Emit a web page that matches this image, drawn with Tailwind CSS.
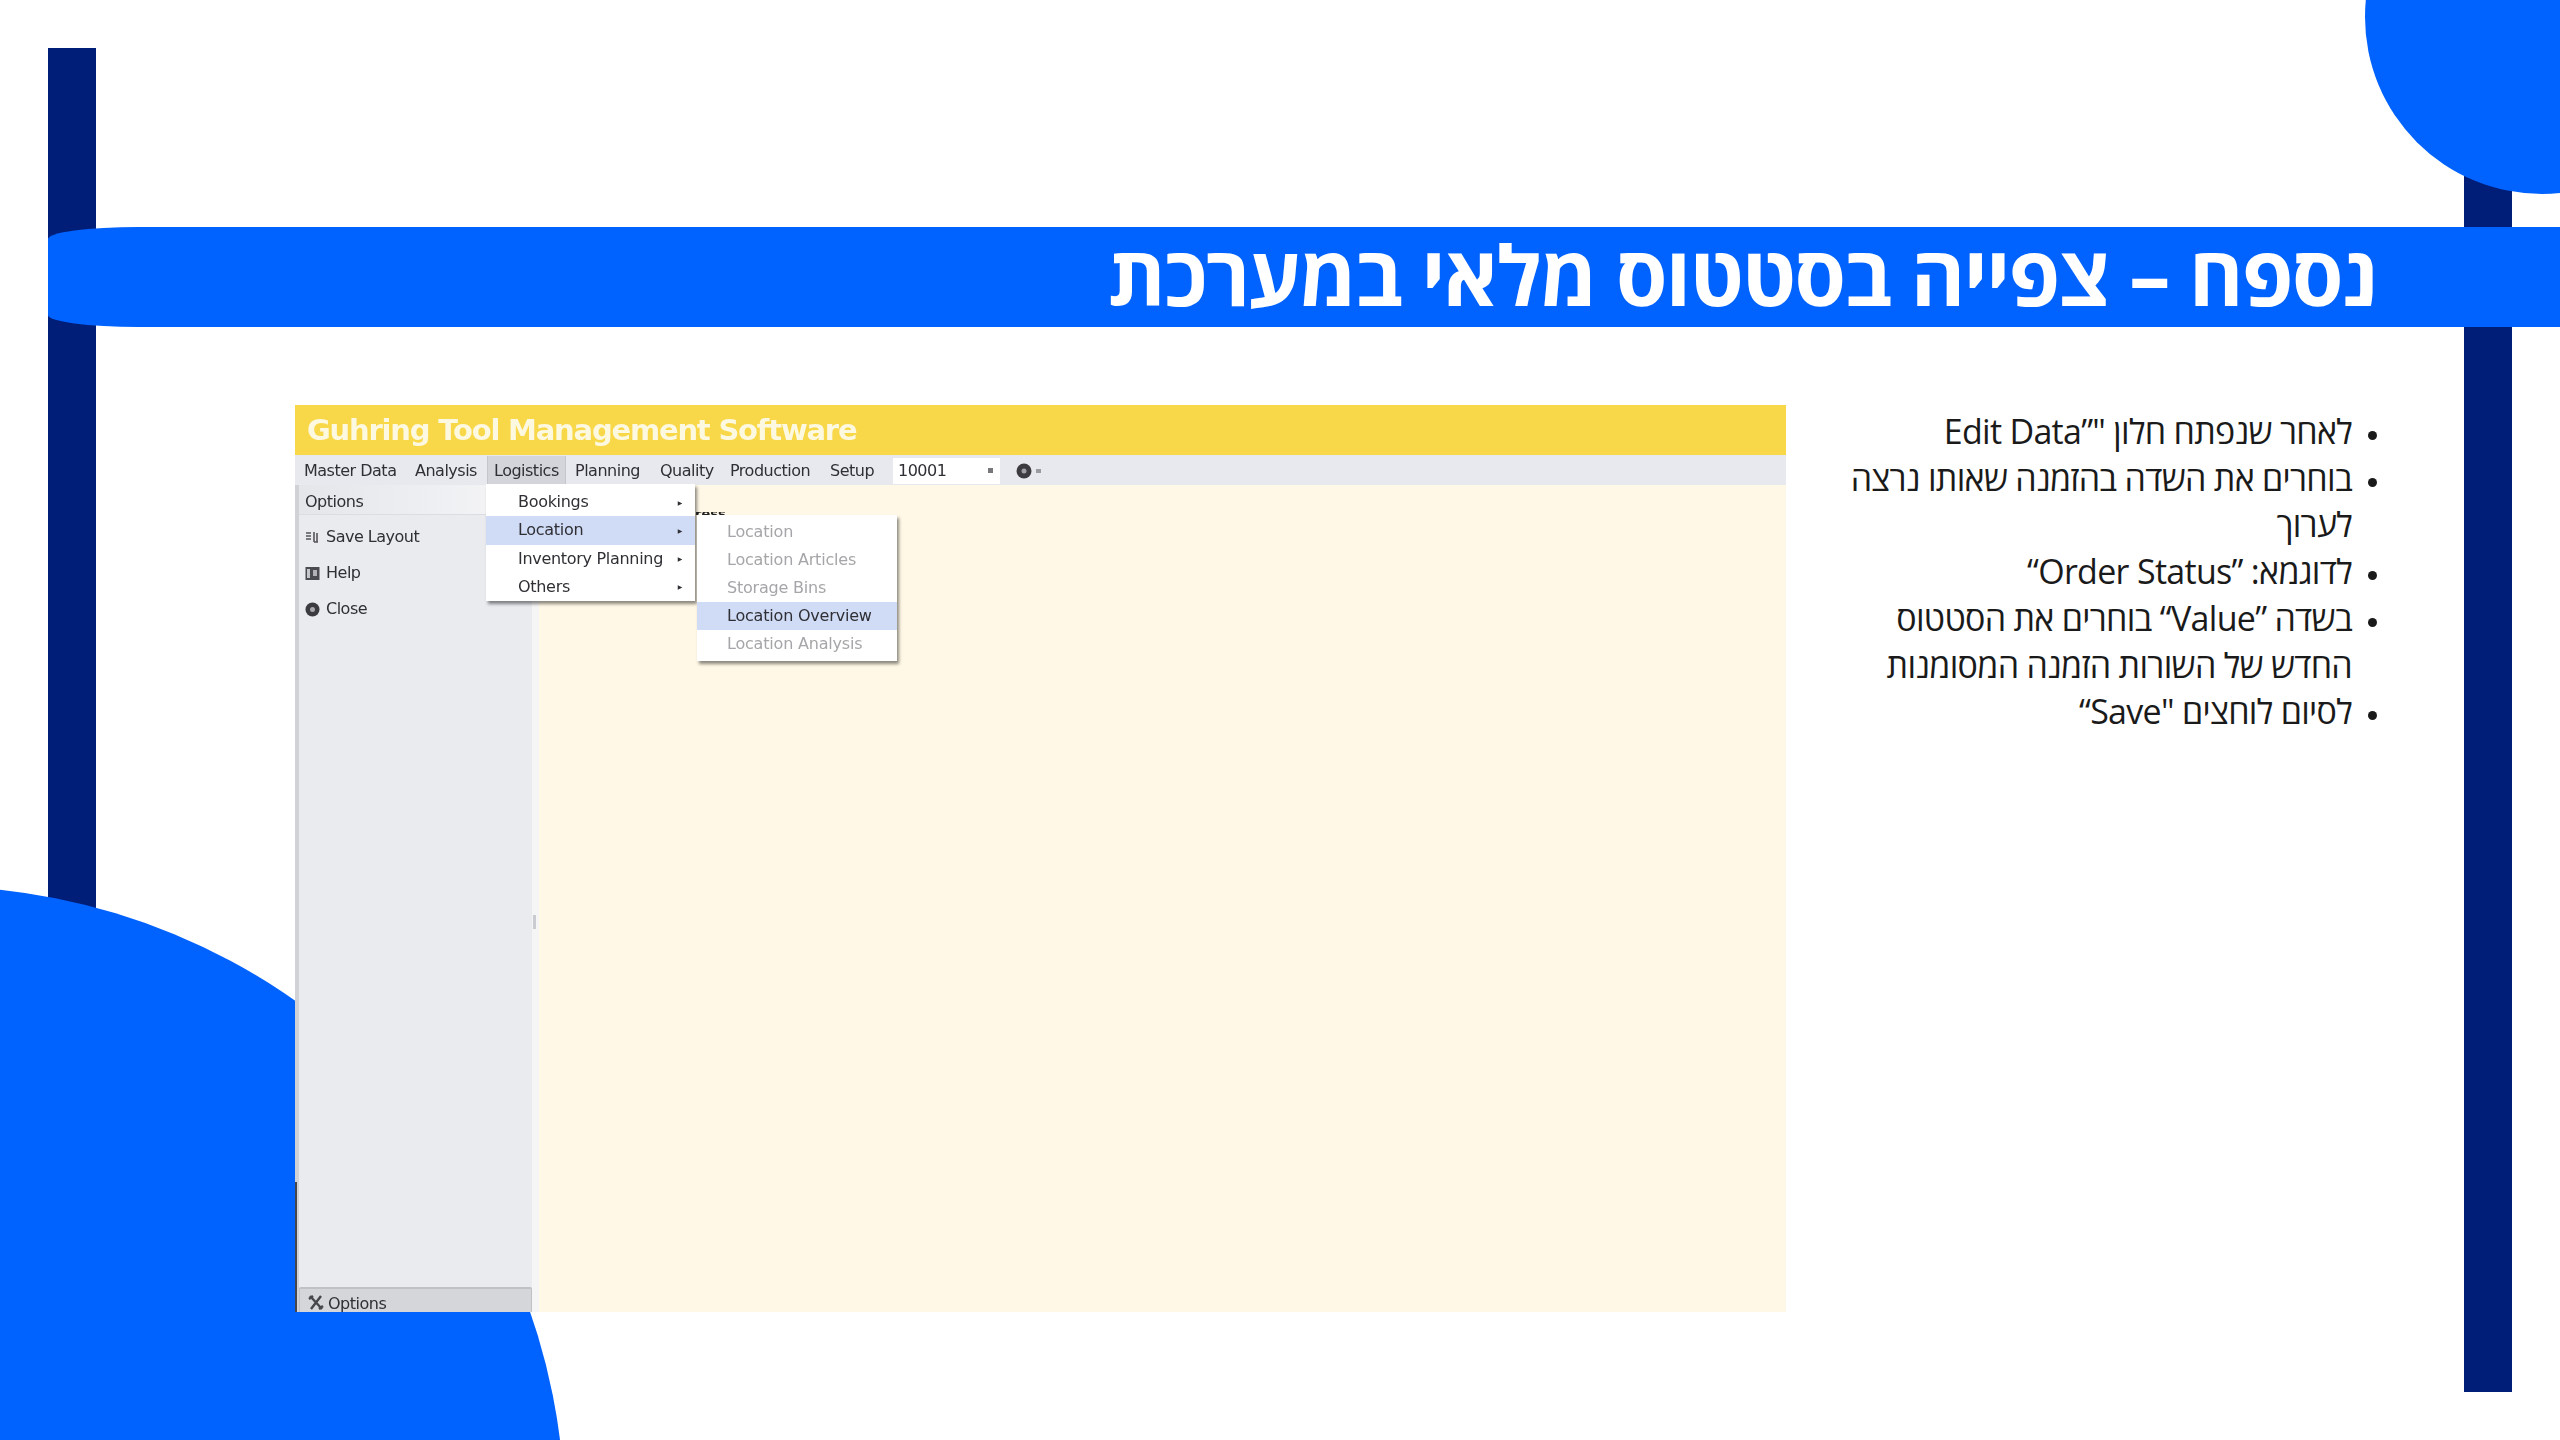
<!DOCTYPE html>
<html lang="he">
<head>
  <meta charset="UTF-8">
  <title>נספח – צפייה בסטטוס מלאי במערכת</title>
  <script src="https://cdn.jsdelivr.net/npm/@tailwindcss/browser@4"></script>
</head>
<body class="bg-white">
  <div class="relative w-[2560px] h-[1440px] overflow-hidden bg-white font-['Open_Sans',sans-serif]">
    <!-- slide decoration -->
    <div class="absolute left-[48px] top-[48px] w-[48px] h-[1000px] bg-[#001e78]"></div>
    <div class="absolute left-[2464px] top-[100px] w-[48px] h-[1292px] bg-[#001e78]"></div>
    <div class="absolute left-[2365px] top-[17px] -translate-y-1/2 w-[354px] h-[354px] rounded-full bg-[#0062ff]"></div>
    <div class="absolute left-[-701px] top-[886px] w-[1266px] h-[1266px] rounded-full bg-[#0062ff]"></div>

    <!-- title -->
    <div class="relative mt-[227px] ml-[48px] h-[100px] w-[2512px] bg-[#0062ff] rounded-l-[90px_12px] flex items-center justify-end pr-[184px] pb-[8px]">
      <h1 dir="rtl" class="text-white text-[83px] font-bold tracking-[-1.5px] leading-none">נספח – צפייה בסטטוס מלאי במערכת</h1>
    </div>

    <div class="relative flex mt-[78px] ml-[295px]">
      <!-- app screenshot -->
      <div class="relative w-[1491px] h-[907px] overflow-hidden bg-[#fff8e6] flex flex-col font-['DejaVu_Sans',sans-serif] text-[#2f2f35] text-[16px] blur-[0.7px]">
        <div class="h-[50px] bg-[#f8d849] flex items-center pl-[12px] pt-[2px] text-[#fdf8e0] text-[29px] font-bold tracking-[-1.2px]">Guhring Tool Management Software</div>

        <div class="h-[30px] bg-[#e8e9ee] flex items-center pl-[9px] pt-[1px] tracking-[-0.5px]">
          <span class="w-[111px]">Master Data</span>
          <span class="w-[72px]">Analysis</span>
          <span class="w-[79px] h-full flex items-center pl-[6px] bg-[#d3d5da] border-x border-[#c4c6cc]">Logistics</span>
          <span class="w-[94px] pl-[9px]">Planning</span>
          <span class="w-[70px]">Quality</span>
          <span class="w-[100px]">Production</span>
          <span class="w-[63px]">Setup</span>
          <span class="w-[107px] h-[26px] bg-white flex items-center justify-between px-[5px]">10001<span class="w-[5px] h-[5px] bg-[#77777c] mr-[2px]"></span></span>
          <svg class="ml-[15px]" width="32" height="18" viewBox="0 0 32 18">
            <circle cx="9" cy="9" r="7.5" fill="#3b3b40"/><circle cx="9" cy="9" r="2.5" fill="#a0a0a6"/>
            <rect x="21" y="7" width="5" height="4" fill="#9a9aa0"/>
          </svg>
        </div>

        <div class="flex-1 flex min-h-0">
          <aside class="relative w-[237px] flex flex-col bg-[#e9ebef] border-l-[4px] border-[#d0d2d6]">
            <div class="h-[30px] flex items-center pl-[6px] pt-[5px] tracking-[-0.5px] bg-linear-to-r from-[#e4e6ea] to-[#f6f6f8] border-b border-[#dcdde2]">Options</div>
            <div class="flex flex-col gap-[12px] pt-[10px] pl-[6px] tracking-[-0.5px]">
              <div class="h-[24px] flex items-center gap-[6px]">
                <svg width="15" height="13" viewBox="0 0 15 13"><path d="M1 2h5M1 5h5M1 8h5M9 1v10M12 2v9M9 11h4" stroke="#55555a" stroke-width="1.6" fill="none"/></svg>
                Save Layout
              </div>
              <div class="h-[24px] flex items-center gap-[6px]">
                <svg width="15" height="15" viewBox="0 0 15 15"><rect x="0.5" y="1" width="14" height="13" fill="#4a4a50"/><rect x="2" y="3" width="3" height="9" fill="#c4c6cc"/><rect x="8" y="4" width="4" height="6" fill="#b0b2b8"/></svg>
                Help
              </div>
              <div class="h-[24px] flex items-center gap-[6px]">
                <svg width="15" height="15" viewBox="0 0 15 15"><circle cx="7.5" cy="7.5" r="7" fill="#3b3b40"/><circle cx="7.5" cy="7.5" r="2.5" fill="#a8a8ae"/></svg>
                Close
              </div>
            </div>
            <div class="mt-auto h-[25px] bg-[#d4d6da] border-t-2 border-x border-[#bfc1c6] rounded-t-[2px] flex items-start pl-[8px] gap-[4px] overflow-hidden">
              <svg class="mt-[5px]" width="16" height="17" viewBox="0 0 16 17"><path d="M2 2l12 13M13 2L3 15M1 5l4-3M11 15l4-3" stroke="#46464b" stroke-width="2.4" fill="none"/></svg>
              <span class="tracking-[-0.5px] leading-[30px]">Options</span>
            </div>
            <!-- left edge turns dark over the blue shape -->
            <div class="absolute left-[-4px] bottom-0 w-[2px] h-[130px] bg-[#44464c]"></div>
          </aside>
          <div class="w-[7px] bg-[#f5f5f5] relative">
            <div class="absolute left-[1px] top-[430px] w-[3px] h-[14px] bg-[#c9cbd0]"></div>
          </div>
          <div class="flex-1"></div>
        </div>

        <!-- text cut off behind the flyout -->
        <div class="absolute left-[400px] top-[107px] h-[3px] overflow-hidden text-[13px] leading-[3px] font-bold text-[#222]">ress</div>

        <!-- logistics menu -->
        <div class="absolute left-[191px] top-[79px] w-[209px] h-[117px] bg-white shadow-[2px_3px_3px_rgba(0,0,0,0.45)] flex flex-col pt-[4px] tracking-[-0.3px]">
          <div class="h-[28.4px] flex items-center justify-between pl-[32px] pr-[13px]">Bookings<span class="text-[6px]">▶</span></div>
          <div class="h-[28.4px] flex items-center justify-between pl-[32px] pr-[13px] bg-[#d0dcf5]">Location<span class="text-[6px]">▶</span></div>
          <div class="h-[28.4px] flex items-center justify-between pl-[32px] pr-[13px]">Inventory Planning<span class="text-[6px]">▶</span></div>
          <div class="h-[28.4px] flex items-center justify-between pl-[32px] pr-[13px]">Others<span class="text-[6px]">▶</span></div>
        </div>

        <!-- location flyout -->
        <div class="absolute left-[402px] top-[110px] w-[200px] h-[146px] bg-white shadow-[2px_3px_3px_rgba(0,0,0,0.45)] flex flex-col py-[3px] text-[#a6a6aa] tracking-[-0.2px]">
          <div class="h-[28.4px] flex items-center pl-[30px]">Location</div>
          <div class="h-[28.4px] flex items-center pl-[30px]">Location Articles</div>
          <div class="h-[28.4px] flex items-center pl-[30px]">Storage Bins</div>
          <div class="h-[28.4px] flex items-center pl-[30px] bg-[#d0dcf5] text-[#2f2f35]">Location Overview</div>
          <div class="h-[28.4px] flex items-center pl-[30px]">Location Analysis</div>
        </div>
      </div>

      <!-- steps -->
      <ul dir="rtl" class="list-disc w-[512px] ml-[54px] mt-[3px] text-[34px] tracking-[-0.7px] leading-[46.7px] text-[#1a1a1a] marker:text-[26px]">
        <li>לאחר שנפתח חלון "”Edit Data</li>
        <li>בוחרים את השדה בהזמנה שאותו נרצה לערוך</li>
        <li>לדוגמא: ”Order Status“</li>
        <li>בשדה ”Value“ בוחרים את הסטטוס החדש של השורות הזמנה המסומנות</li>
        <li>לסיום לוחצים "Save“</li>
      </ul>
    </div>
  </div>
</body>
</html>
